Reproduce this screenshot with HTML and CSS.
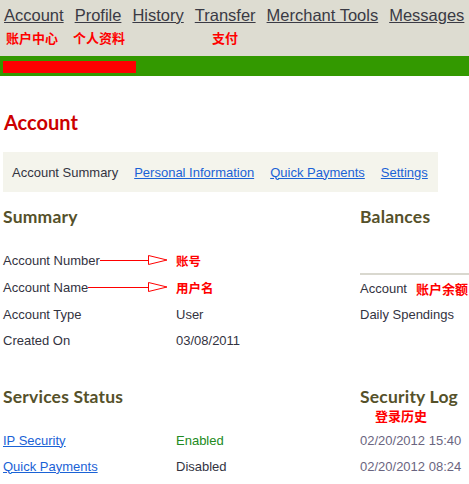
FILE: index.html
```html
<!DOCTYPE html>
<html lang="en">
<head>
<meta charset="utf-8">
<title>Account</title>
<link rel="stylesheet" href="styles.css">
</head>
<body>
<header class="topbar">
  <nav class="mainnav">
    <a href="#">Account</a>
    <a href="#">Profile</a>
    <a href="#">History</a>
    <a href="#">Transfer</a>
    <a href="#">Merchant Tools</a>
    <a href="#">Messages</a>
  </nav>
  <div class="cnrow">
    <span class="cn cn-account">账户中心</span>
    <span class="cn cn-profile">个人资料</span>
    <span class="cn cn-transfer">支付</span>
  </div>
</header>
<div class="greenbar"><div class="redbar"></div></div>

<main class="content">
  <h1 class="title">Account</h1>
  <div class="subnav">
    <span class="current">Account Summary</span>
    <a href="#">Personal Information</a>
    <a href="#">Quick Payments</a>
    <a href="#">Settings</a>
  </div>

  <div class="section">
    <div class="leftcol">
      <h2 class="heading">Summary</h2>
      <div class="rows">
        <div class="row">
          <div class="label"><span>Account Number</span><span class="arrow"><span class="line"></span><svg width="20" height="10" viewBox="0 0 20 10"><polygon points="0.5,0.5 19,5 0.5,9.5" fill="none" stroke="#ff0000" stroke-width="1"/></svg></span></div>
          <div class="value"><span class="cn">账号</span></div>
        </div>
        <div class="row tall">
          <div class="label"><span>Account Name</span><span class="arrow"><span class="line"></span><svg width="20" height="10" viewBox="0 0 20 10"><polygon points="0.5,0.5 19,5 0.5,9.5" fill="none" stroke="#ff0000" stroke-width="1"/></svg></span></div>
          <div class="value"><span class="cn">用户名</span></div>
        </div>
        <div class="row">
          <div class="label">Account Type</div>
          <div class="value">User</div>
        </div>
        <div class="row">
          <div class="label">Created On</div>
          <div class="value">03/08/2011</div>
        </div>
      </div>
    </div>
    <div class="rightcol">
      <h2 class="heading">Balances</h2>
      <div class="balances">
        <div class="row"><span>Account</span><span class="cn">账户余额</span></div>
        <div class="row">Daily Spendings</div>
      </div>
    </div>
  </div>

  <div class="section second">
    <div class="leftcol">
      <h2 class="heading">Services Status</h2>
      <div class="rows">
        <div class="row">
          <div class="label"><a href="#">IP Security</a></div>
          <div class="value enabled">Enabled</div>
        </div>
        <div class="row">
          <div class="label"><a href="#">Quick Payments</a></div>
          <div class="value">Disabled</div>
        </div>
      </div>
    </div>
    <div class="rightcol">
      <h2 class="heading">Security Log</h2>
      <div class="cn loglabel">登录历史</div>
      <div class="log">
        <div class="row date">02/20/2012 15:40</div>
        <div class="row date">02/20/2012 08:24</div>
      </div>
    </div>
  </div>
</main>
</body>
</html>
```

FILE: styles.css
```css
html, body {
  margin: 0;
  padding: 0;
  background: #ffffff;
  overflow: hidden;
}
body {
  font-family: "Liberation Sans", Arial, sans-serif;
  font-size: 13px;
  color: #33333f;
  width: 469px;
}
.cn {
  font-family: "Noto Sans CJK SC", sans-serif;
  font-weight: 700;
  font-size: 13px;
  color: #ff0000;
}

/* top bar */
.topbar {
  background: #dddcd1;
  height: 56px;
}
.mainnav {
  display: flex;
  gap: 11px;
  padding: 2px 0 0 4px;
  height: 26px;
  line-height: 26px;
  font-size: 16.5px;
  white-space: nowrap;
}
.mainnav a {
  color: #3a3a44;
  text-decoration: underline;
}
.cnrow {
  display: flex;
  height: 16px;
  line-height: 16px;
  margin-top: 2px;
  padding-left: 6px;
}
.cn-profile { margin-left: 15px; }
.cn-transfer { margin-left: 87px; }

.greenbar {
  background: #339900;
  height: 20px;
  padding: 5px 0 0 3px;
  box-sizing: border-box;
}
.redbar {
  background: #ff0000;
  width: 133px;
  height: 12px;
}

/* content */
.content {
  padding-left: 3px;
}
.title {
  margin: 34px 0 0 1px;
  font-family: "Lato", "Open Sans", sans-serif;
  font-weight: 700;
  font-size: 20px;
  line-height: 24px;
  color: #cc0000;
}
.subnav {
  margin-top: 18px;
  width: 435px;
  box-sizing: border-box;
  height: 40px;
  background: #f4f4ec;
  display: flex;
  align-items: center;
  gap: 16px;
  padding-left: 9px;
  white-space: nowrap;
}
.subnav a {
  color: #1a62d6;
}
.subnav .current {
  color: #33333f;
}

.section {
  display: grid;
  grid-template-columns: 357px 1fr;
  margin-top: 15px;
}
.section.second {
  margin-top: 34px;
}
.heading {
  margin: 0;
  font-family: "Lato", "Open Sans", sans-serif;
  font-weight: 700;
  font-size: 17.5px;
  letter-spacing: 0.2px;
  line-height: 20px;
  color: #55512a;
  white-space: nowrap;
}
.rows {
  margin-top: 20px;
}
.row {
  display: flex;
  align-items: center;
  height: 26px;
  white-space: nowrap;
}
.row.tall {
  height: 28px;
}
.label {
  width: 173px;
  display: flex;
  align-items: center;
}
.label a {
  color: #1a62d6;
}
.arrow {
  flex: 1;
  display: flex;
  align-items: center;
  padding-right: 8px;
}
.arrow .line {
  flex: 1;
  height: 1px;
  background: #ff0000;
}
.arrow svg {
  display: block;
}
.value .cn {
  font-size: 12.5px;
}
.enabled {
  color: #228a22;
}

.balances {
  margin-top: 46px;
  border-top: 2px solid #d9d8cf;
}
.balances .row {
  gap: 9px;
}
.loglabel {
  padding-left: 15px;
  height: 16px;
  line-height: 16px;
  margin-top: 1px;
  margin-bottom: 3px;
}
.date {
  color: #6a6580;
}
```
